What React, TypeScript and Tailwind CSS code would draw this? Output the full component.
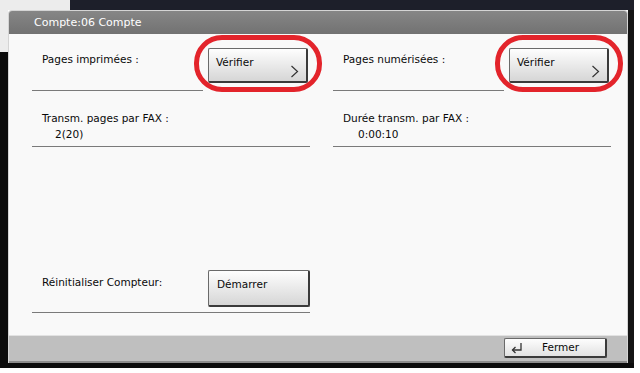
import React from "react";

const font = { fontFamily: '"DejaVu Sans", "Liberation Sans", sans-serif' };

const Chevron: React.FC = () => (
	<svg width="9" height="13" viewBox="0 0 9 13" className="absolute right-[7px] bottom-[3px]">
		<polyline points="1.5,1 7.5,6.5 1.5,12" fill="none" stroke="#333" strokeWidth="1.2" />
	</svg>
);

const CheckButton: React.FC = () => (
	<div className="relative w-[100px] h-[35px] ml-[5px] rounded-[2px] border border-[#6a6a6a] border-r-2 border-b-2 border-r-[#3a3a3a] border-b-[#3a3a3a] bg-gradient-to-b from-[#fefefe] to-[#d6d6d6] px-[7px] pt-[6px] text-[10.5px] text-[#0a0a0a] leading-[14px]">
		Vérifier
		<Chevron />
	</div>
);

const Ring: React.FC = () => (
	<div className="absolute left-[162px] top-[-13px] w-[128px] h-[57px] rounded-[28px] border-[5px] border-[#e3242b]" />
);

export default function App() {
	return (
		<div className="w-[640px] h-[373px] bg-white flex flex-col overflow-hidden" style={font}>
			{/* top of the photo */}
			<div className="flex h-[10px]">
				<div className="w-[70px] bg-[#ececec]" />
				<div className="flex-1 bg-[#1d1f2a]" />
				<div className="w-[6px] bg-white" />
			</div>
			<div className="flex h-[353px]">
				<div className="w-[8px] flex flex-col">
					<div className="h-[42px] bg-[#ececec]" />
					<div className="flex-1 bg-[#0b0b0b]" />
				</div>
				{/* dialog */}
				<div className="w-[620px] flex flex-col rounded-tl-[4px] rounded-tr-[4px] overflow-hidden border border-[#d4d4d4] border-b-0">
					<div className="h-[23px] bg-gradient-to-b from-[#868686] to-[#727272] pl-[25px] pt-[5px] text-[11px] leading-[14px] text-white">
						Compte:06 Compte
					</div>
					<div className="flex-1 bg-[#f9f9f9] flex flex-col pl-[23px] pr-[16px] pt-[14px] pb-[22px]">
						<div className="flex gap-[23px]">
							{/* left column */}
							<div className="w-[278px] flex flex-col">
								<div className="relative flex items-start h-[43px]">
									<div className="w-[171px] h-full border-b border-[#7a7a7a] pl-[10px] pt-[4px] text-[10.5px] leading-[14px] text-[#0a0a0a]">
										Pages imprimées :
									</div>
									<CheckButton />
									<Ring />
								</div>
								<div className="mt-[20px] border-b border-[#7a7a7a] pl-[10px] pb-[5px] text-[10.5px] leading-[14px] text-[#0a0a0a]">
									<div>Transm. pages par FAX :</div>
									<div className="mt-[2px] pl-[13px]">2(20)</div>
								</div>
							</div>
							{/* right column */}
							<div className="w-[278px] flex flex-col">
								<div className="relative flex items-start h-[43px]">
									<div className="w-[171px] h-full border-b border-[#7a7a7a] pl-[10px] pt-[4px] text-[10.5px] leading-[14px] text-[#0a0a0a]">
										Pages numérisées :
									</div>
									<CheckButton />
									<Ring />
								</div>
								<div className="mt-[20px] border-b border-[#7a7a7a] pl-[10px] pb-[5px] text-[10.5px] leading-[14px] text-[#0a0a0a]">
									<div>Durée transm. par FAX :</div>
									<div className="mt-[2px] pl-[15px]">0:00:10</div>
								</div>
							</div>
						</div>
						<div className="mt-auto w-[278px] h-[43px] flex items-start border-b border-[#7a7a7a]">
							<div className="w-[176px] pl-[10px] pt-[5px] text-[10.5px] leading-[14px] text-[#0a0a0a]">Réinitialiser Compteur:</div>
							<div className="w-[102px] h-[37px] rounded-[2px] border border-[#6a6a6a] border-r-2 border-b-2 border-r-[#3a3a3a] border-b-[#3a3a3a] bg-gradient-to-b from-[#fefefe] to-[#d6d6d6] px-[8px] pt-[6px] text-[10.5px] leading-[14px] text-[#0a0a0a]">
								Démarrer
							</div>
						</div>
					</div>
					<div className="h-[26px] bg-[#bfbfbf] border-t border-[#e2e2e2] flex items-start justify-end pr-[20px] pt-[2px]">
						<div className="w-[103px] h-[20px] rounded-[2px] border border-[#6a6a6a] border-r-2 border-b-2 border-r-[#3a3a3a] border-b-[#3a3a3a] bg-gradient-to-b from-[#fdfdfd] to-[#e2e2e2] flex items-center text-[10.5px] text-[#0a0a0a]">
							<svg width="14" height="12" viewBox="0 0 14 12" className="ml-[5px]">
								<polyline points="11,1 11,8 2.5,8" fill="none" stroke="#333" strokeWidth="1.3" />
								<polyline points="5.5,5 2.5,8 5.5,11" fill="none" stroke="#333" strokeWidth="1.3" />
							</svg>
							<span className="ml-[18px]">Fermer</span>
						</div>
					</div>
					<div className="h-[2px] bg-[#8c8c8c]" />
				</div>
				<div className="w-[6px] bg-[#141414]" />
				<div className="w-[6px] bg-white" />
			</div>
			<div className="flex h-[10px]">
				<div className="w-[634px] h-[5px] bg-[#0b0b0b]" />
			</div>
		</div>
	);
}
